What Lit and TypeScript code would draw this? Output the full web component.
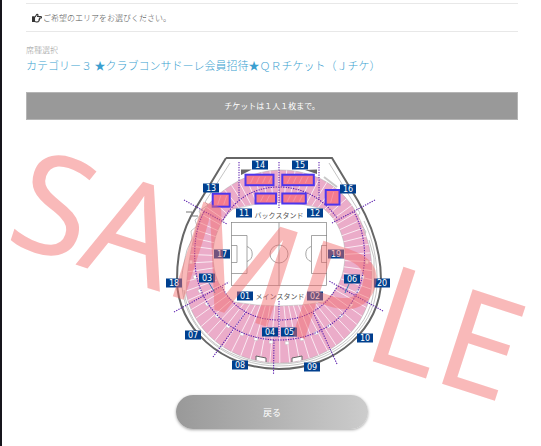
import { LitElement, html, svg, css } from "lit";
import { customElement } from "lit/decorators.js";

type Block = [label: string, cx: number, cy: number];
type Seat = [x: number, y: number, w: number, h: number];
type Line = [x1: number, y1: number, x2: number, y2: number];

const BLOCKS: Block[] = [
  ["14", 260, 165], ["15", 300, 165], ["13", 211, 188], ["16", 348, 189],
  ["11", 244, 213], ["12", 315, 213], ["17", 222, 254], ["19", 336, 254],
  ["18", 174, 283], ["20", 382, 283], ["03", 207, 278], ["06", 352, 279],
  ["01", 245, 296], ["02", 315, 296], ["04", 270, 332], ["05", 289, 332],
  ["07", 193, 335], ["10", 365, 338], ["08", 240, 365], ["09", 312, 367],
];

const OPEN_SEATS: Seat[] = [
  [245.5, 174.7, 28, 10.5], [282.3, 174.7, 31.5, 10.5], [255.5, 193.5, 20.5, 10],
  [282.3, 193.5, 23.5, 10], [212.7, 193.7, 17, 13], [325.7, 190, 13.8, 14.6],
];

const DIVIDERS: Line[] = [
  [184, 200, 227, 224], [174, 312, 229, 282], [213, 357, 246, 312],
  [239, 162, 239, 200], [279, 162, 279, 208], [319, 162, 319, 200],
  [375, 200, 332, 223], [383, 311, 329, 281], [337, 364, 313, 312],
  [279, 301, 279, 338], [274, 340, 273.5, 375],
];

const NOTCHES: [number, number, number][] = [
  [195, 277, 75], [200, 291, 60], [207, 304, 50], [217, 316, 42], [228, 326, 35],
  [242, 334, 22], [256, 339, 12], [271, 342, 3], [287, 343, -3], [302, 339, -12],
  [316, 333, -24], [329, 326, -35], [341, 316, -42], [351, 305, -50], [358, 291, -62],
  [363, 277, -75], [367, 262, -85], [191, 262, 85],
];

const RING_OUTER =
  "M240 180Q279 161 319 178C342 189 358 208 366 236C372 252 373 272 371 291" +
  "C364 333 325 363 279 363C233 363 194 334 186 293C187 270 191 244 199 219C207 203 220 191 240 180Z";
const RING_INNER =
  "M233 209Q279 196 324 209C338 220 345 238 345 254C345 276 337 292 324 302" +
  "Q279 310 234 302C220 291 213 276 213 254C213 238 220 220 233 209Z";

const ray = (i: number) => {
  const a = (i * Math.PI * 2) / 66 + 0.04;
  return svg`<line class="ray" x1="279" y1="258"
    x2=${(279 + 130 * Math.cos(a)).toFixed(1)} y2=${(258 + 130 * Math.sin(a)).toFixed(1)}></line>`;
};

@customElement("stadium-map")
class StadiumMap extends LitElement {
  static styles = css`
    :host { display: block; }
    svg { display: block; width: 100%; overflow: visible; }
    .shell { fill: none; stroke: #666; stroke-width: 2; }
    .thin { fill: none; stroke: #aaa; stroke-width: 0.7; }
    .pitch { fill: none; stroke: #808080; stroke-width: 0.7; }
    .ring { fill: #ebadc9; fill-rule: evenodd; stroke: #aaa; stroke-width: 0.5; }
    .ray { stroke: #fff; stroke-width: 1; opacity: 0.75; }
    .dots { fill: none; stroke: #5c1fae; stroke-width: 1.1; stroke-dasharray: 1.3 1.2; }
    .notch { fill: #fff; stroke: #bbb; stroke-width: 0.4; }
    .roof { fill: #666; }
    .leader { stroke: #0e6bb0; stroke-width: 0.8; }
    .seat { fill: #f57a8d; stroke: #4d35ee; stroke-width: 2; }
    .hatch { stroke: #f7a8b4; stroke-width: 0.6; }
    .tag { fill: #003f8e; }
    .num { fill: #fff; font: 8px "DejaVu Sans", sans-serif; text-anchor: middle; }
    .stand { fill: #555; font: 7px "Noto Sans CJK JP", sans-serif; text-anchor: middle; }
    .mark { fill: #f26b6b; fill-opacity: 0.47; font: 139px "Noto Sans", sans-serif; }
  `;

  render() {
    return html`<svg viewBox="26 152 492 228" role="img" aria-label="座席エリア">
      <defs>
        <clipPath id="ring"><path clip-rule="evenodd" d=${RING_OUTER + RING_INNER}></path></clipPath>
      </defs>
      <path class="shell" d="M226 158H332L358 201C373 227 381 253 381 280C381 327 337 369 279 369C221 369 177 327 177 280C177 256 181 235 191 216L226 158"></path>
      <path class="thin" d="M230 163L205 202L208 205L199 211L201 215L195 220L197 226L191 231L192 239L187 250C183 266 181 276 182 287C186 332 228 366 279 366C331 366 374 331 377 286C378 262 373 239 364 221M329 163L360 213L357 217L366 232L364 235"></path>
      <path class="thin" d="M184 290C189 336 232 364 279 364C327 364 369 333 374 290V258L369 240"></path>
      <path d="M186 212H192V216H198" fill="none" stroke="#777"></path>
      <path d="M324 177L337 187" stroke="#c8c8c8" stroke-width="2"></path>
      <path class="ring" d=${RING_OUTER + RING_INNER}></path>
      <g clip-path="url(#ring)">${Array.from({ length: 66 }, (_, i) => ray(i))}</g>
      <path class="roof" d="M241 169.500H252L241 175ZM305 170L317 169.500V174Z"></path>
      ${NOTCHES.map(([x, y, r]) => svg`<rect class="notch" x=${x - 1.8} y=${y - 1.5} width="3.600" height="3" transform="rotate(${r} ${x} ${y})"></rect>`)}
      <path d="M256 360V356L266 358V362M292 362V358L302 356V360" fill="#fff" stroke="#666"></path>

      <g class="pitch">
        <rect x="231.500" y="222.500" width="95" height="63"></rect>
        <path d="M279 222.500V285.500M231.500 235.500H247V273.500H231.500M231.500 245.500H237V262.500H231.500M327 235.500H311.500V273.500H327M327 245.500H321.500V262.500H327"></path>
        <path d="M247 246.500A8 8 0 0 1 247 261.500M311 246.500A8 8 0 0 0 311 261.500"></path>
        <circle cx="279" cy="254" r="9"></circle>
      </g>

      <g class="dots">
        ${DIVIDERS.map(([a, b, c, d]) => svg`<line x1=${a} y1=${b} x2=${c} y2=${d}></line>`)}
        <path d="M223 220C236 197 256 187 279 187C303 187 324 199 337 218"></path>
        <path d="M204 212C195 229 193 250 196 273C203 313 236 340 279 340C322 340 356 313 363 273C367 250 363 229 354 212"></path>
        <path d="M222 287C234 310 255 320 279 320C303 320 324 310 337 287"></path>
      </g>
      <path class="leader" d="M209 283L215 293M349 284L345 293"></path>

      ${OPEN_SEATS.map(([x, y, w, h]) => svg`
        <rect class="seat" x=${x} y=${y} width=${w} height=${h}></rect>
        ${Array.from({ length: Math.floor((w - 3) / 6) }, (_, i) => svg`
          <line class="hatch" x1=${x + 5 + i * 6} y1=${y + h - 2} x2=${x + 8 + i * 6} y2=${y + 2}></line>`)}`)}

      ${BLOCKS.map(([label, x, y]) => svg`
        <rect class="tag" x=${x - 8} y=${y - 4.5} width="16" height="9"></rect>
        <text class="num" x=${x} y=${y + 3}>${label}</text>`)}
      <text class="stand" x="279" y="218">バックスタンド</text>
      <text class="stand" x="280" y="299">メインスタンド</text>

      <text class="mark" transform="translate(3 241) rotate(18)">SAMPLE</text>
    </svg>`;
  }
}

@customElement("app-root")
class AppRoot extends LitElement {
  static styles = css`
    :host {
      display: block;
      box-sizing: border-box;
      min-height: 100vh;
      padding: 3px 23px 16px 24px;
      border-left: 2px solid #16151c;
      background: #fff;
      color: #555;
      font-family: "Noto Sans CJK JP", sans-serif;
      font-size: 8px;
      font-weight: 300;
      line-height: 12px;
    }
    .lead {
      display: flex;
      align-items: center;
      gap: 1px;
      margin: 0;
      padding: 8px 6px 7px;
      border: solid #e8e8e8;
      border-width: 1px 0;
    }
    .hand { width: 10px; height: 10px; }
    .caption { margin: 12px 0 0; color: #999; }
    .name {
      margin: 0;
      color: #3b9fd0;
      font-size: 11px;
      font-weight: 300;
      line-height: 18px;
    }
    .notice {
      margin: 18px 0 32px;
      padding: 7px;
      border: 1px solid #b5b5b5;
      background: #999;
      color: #fff;
      text-align: center;
      font-weight: 400;
    }
    .back {
      display: block;
      width: 192px;
      height: 34px;
      margin: 15px auto 0;
      border: 0;
      border-radius: 17px;
      background: linear-gradient(90deg, #999, #ccc);
      box-shadow: 0 1px 3px rgba(0, 0, 0, 0.35);
      color: #fff;
      font: 400 9px "Noto Sans CJK JP", sans-serif;
    }
  `;

  render() {
    return html`
      <p class="lead">
        <svg class="hand" viewBox="0 0 20 18" fill="none" stroke="#333" stroke-width="2.200" stroke-linejoin="round" aria-hidden="true">
          <path d="M1 7H5V16H1ZM5 7C8 7 8 2 10 1.500C13 1.500 12 4 11 6H17.500C19.500 6 19.500 9 17.500 9H14.500C16 10 16 12 14 12.300C15 14 14 15 13 15C13 17 12 17 10 17C8 17 7 16 5 16"></path>
          <path d="M1 7H4V16H1Z" fill="#333"></path>
        </svg>
        <span>ご希望のエリアをお選びください。</span>
      </p>
      <p class="caption">席種選択</p>
      <h1 class="name">カテゴリー３ ★クラブコンサドーレ会員招待★ＱＲチケット（Ｊチケ）</h1>
      <p class="notice">チケットは１人１枚まで。</p>
      <stadium-map></stadium-map>
      <button class="back" type="button">戻る</button>
    `;
  }
}
